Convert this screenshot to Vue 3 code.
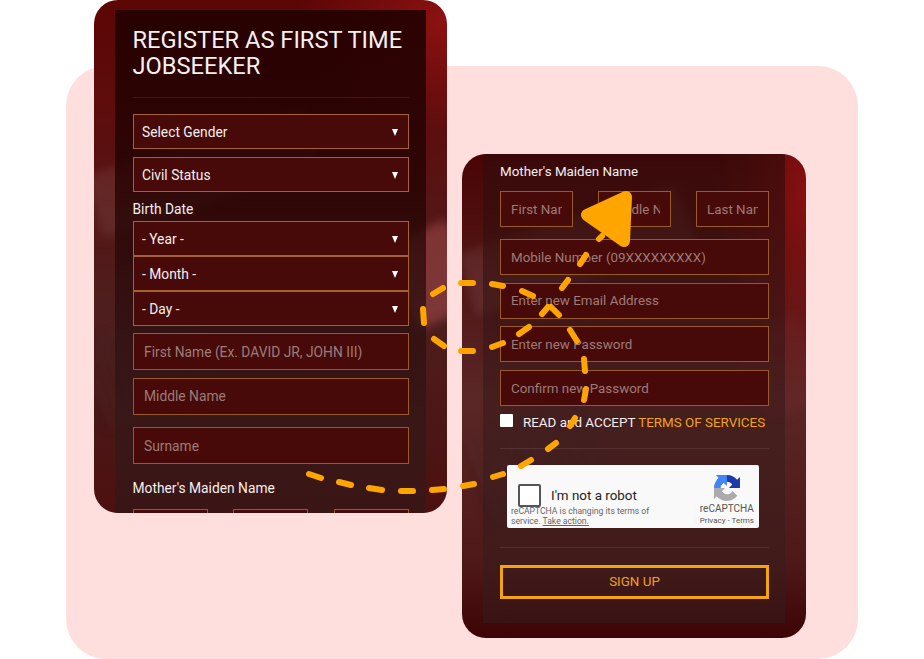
<script setup>
const dashes = [
  'M309 474L321 478', 'M339 482L351 485', 'M369 488L382 490', 'M401 491L413 491', 'M432 490L444 489',
  'M463 486L474 484', 'M493 477L503 474', 'M521 466L531 460', 'M548 449L556 443', 'M570 426L575 418',
  'M584 400L586 389', 'M585 371L584 359', 'M577 341L570 330', 'M559 315L551 307', 'M533 296L522 291',
  'M503 286L492 284', 'M473 283L461 283', 'M443 288L433 294', 'M423 309L424 323', 'M434 339L444 346',
  'M461 351L473 351', 'M492 347L503 343', 'M519 334L529 327', 'M542 314L548 307', 'M562 288L568 280',
  'M580 264L586 255', 'M599 239L602 236'
]
const topSelects = ['Select Gender', 'Civil Status']
const dateSelects = ['- Year -', '- Month -', '- Day -']
const nameInputs = ['First Name', 'Middle Name', 'Last Name']
const accountInputs = ['Mobile Number (09XXXXXXXXX)', 'Enter new Email Address', 'Enter new Password', 'Confirm new Password']
</script>

<template>
  <div class="stage">
    <div class="backdrop"></div>

    <section class="phone phone-left">
      <div class="photo"><i class="sheet"></i><i class="glow"></i><i class="keys"></i></div>
      <div class="sheet-panel">
        <h1 class="title">REGISTER AS FIRST TIME JOBSEEKER</h1>
        <hr class="rule first-rule" />
        <div v-for="s in topSelects" :key="s" class="select-box spaced">
          <span>{{ s }}</span><i class="caret"></i>
        </div>
        <label class="field-label birth">Birth Date</label>
        <div v-for="s in dateSelects" :key="s" class="select-box date">
          <span>{{ s }}</span><i class="caret"></i>
        </div>
        <input class="text-input first" placeholder="First Name (Ex. DAVID JR, JOHN III)" />
        <input class="text-input middle" placeholder="Middle Name" />
        <input class="text-input surname" placeholder="Surname" />
        <label class="field-label maiden">Mother's Maiden Name</label>
        <div class="name-row wide">
          <input v-for="n in nameInputs" :key="n" class="text-input small" />
        </div>
      </div>
    </section>

    <section class="phone phone-right">
      <div class="photo"><i class="sheet"></i><i class="glow"></i><i class="keys"></i></div>
      <div class="sheet-panel">
        <label class="field-label">Mother's Maiden Name</label>
        <div class="name-row">
          <input v-for="n in nameInputs" :key="n" class="text-input small" :placeholder="n" />
        </div>
        <div class="account">
          <input v-for="p in accountInputs" :key="p" class="text-input" :placeholder="p" />
        </div>
        <div class="terms">
          <input type="checkbox" class="check" />
          <span class="terms-text">READ and ACCEPT <a class="link">TERMS OF SERVICES</a></span>
        </div>
        <hr class="rule terms-rule" />
        <div class="captcha">
          <div class="captcha-main">
            <div class="captcha-row">
              <span class="captcha-box"></span>
              <span class="captcha-text">I'm not a robot</span>
            </div>
            <p class="captcha-note">reCAPTCHA is changing its terms of<br />service. <u>Take action.</u></p>
          </div>
          <div class="captcha-brand">
            <svg class="captcha-logo" viewBox="0 0 64 64">
              <path d="M64 31.955l-.033-1.37V4.687l-7.16 7.16C50.948 4.674 42.033.093 32.05.093c-10.4 0-19.622 4.96-25.458 12.64l11.736 11.86a15.55 15.55 0 0 1 4.754-5.334c2.05-1.6 4.952-2.906 8.968-2.906.485 0 .86.057 1.135.163 4.976.393 9.288 3.14 11.828 7.124l-8.307 8.307 32.3.001" fill="#1c3aa9" />
              <path d="M31.862 0l-1.37.033H4.594l7.16 7.16C4.58 13.05 0 21.967 0 31.95c0 10.4 4.96 19.622 12.64 25.458l11.86-11.736a15.55 15.55 0 0 1-5.334-4.754c-1.6-2.05-2.906-4.952-2.906-8.968 0-.485.057-.86.163-1.135.393-4.976 3.14-9.288 7.124-11.828l8.307 8.307L31.862 0" fill="#4285f4" />
              <path d="M.001 31.95l.033 1.37v25.9l7.16-7.16c5.86 7.173 14.774 11.754 24.76 11.754 10.39 0 19.62-4.96 25.457-12.64l-11.736-11.86a15.55 15.55 0 0 1-4.754 5.334c-2.05 1.6-4.952 2.906-8.968 2.906-.485 0-.86-.057-1.135-.163-4.976-.393-9.288-3.14-11.828-7.124l8.307-8.307-32.3-.001" fill="#ababab" />
            </svg>
            <span class="brand-name">reCAPTCHA</span>
            <span class="brand-links">Privacy - Terms</span>
          </div>
        </div>
        <hr class="rule captcha-rule" />
        <button class="signup">SIGN UP</button>
      </div>
    </section>

    <svg class="route" viewBox="0 0 924 659">
      <g fill="none" stroke="#ffa500" stroke-width="6" stroke-linecap="round">
        <path v-for="d in dashes" :key="d" :d="d" />
      </g>
      <path d="M587 215L626 197L624 241Z" fill="#ffa500" stroke="#ffa500" stroke-width="12" stroke-linejoin="round" />
    </svg>
  </div>
</template>

<style scoped>
.stage {
  position: relative;
  width: 924px;
  height: 659px;
  overflow: hidden;
  font-family: Roboto, "Liberation Sans", sans-serif;
  background: #fff;
}
.backdrop {
  margin: 66px 66px 0;
  height: 593px;
  border-radius: 40px;
  background: #ffdfdd;
}
.phone {
  position: absolute;
  overflow: hidden;
  border-radius: 24px;
  background:
    radial-gradient(150px 110px at 100% 4%, #8c1212 0%, rgba(140, 18, 18, 0) 100%),
    linear-gradient(180deg, #5c0505 0%, #5e0c0c 20%, #4e1e1e 60%, #4c1010 100%);
}
.phone-left {
  left: 94px;
  top: 0;
  width: 353px;
  height: 513px;
}
.phone-right {
  left: 462px;
  top: 154px;
  width: 344px;
  height: 484px;
  background:
    radial-gradient(90px 200px at 100% 8%, #861010 0%, rgba(134, 16, 16, 0) 100%),
    linear-gradient(180deg, #4a0505 0%, #5a2626 50%, #4f1818 85%, #3c0404 100%);
}
.photo {
  position: absolute;
  inset: 0;
  filter: blur(5px);
}
.sheet {
  position: absolute;
  left: -6px;
  top: 140px;
  width: 230px;
  height: 64px;
  background: rgba(255, 255, 255, 0.08);
  transform: rotate(-18deg);
}
.glow {
  position: absolute;
  right: -20px;
  top: 230px;
  width: 70px;
  height: 90px;
  background: rgba(170, 80, 80, 0.5);
  transform: rotate(-24deg);
}
.keys {
  position: absolute;
  left: -10px;
  top: 320px;
  width: 130px;
  height: 90px;
  background: repeating-linear-gradient(90deg, rgba(0, 0, 0, 0.2) 0 6px, rgba(255, 255, 255, 0.05) 6px 12px);
  transform: rotate(-22deg);
}
.phone-right .keys {
  left: 10px;
  top: 262px;
}
.phone-right .sheet {
  left: 0;
  top: 64px;
}
.phone-right .glow {
  top: 170px;
  right: -10px;
  background: rgba(120, 40, 40, 0.3);
}
.sheet-panel {
  position: relative;
  box-sizing: border-box;
  margin: 10px 21px 0;
  padding: 17px 17.5px 0;
  width: 311px;
  height: 600px;
  background: linear-gradient(180deg, rgba(34, 0, 0, 0.9) 0%, rgba(38, 3, 3, 0.82) 30%, rgba(46, 24, 24, 0.62) 70%, rgba(48, 24, 24, 0.6) 100%);
}
.phone-right .sheet-panel {
  margin: 0 21px;
  padding: 10px 16px 0 17px;
  width: 302px;
  height: 469px;
  background: linear-gradient(180deg, rgba(50, 10, 10, 0.66) 0%, rgba(54, 26, 26, 0.55) 60%, rgba(52, 28, 28, 0.55) 100%);
}
.title {
  margin: 0;
  color: #f6f1f0;
  font-size: 23.65px;
  font-weight: 400;
  line-height: 26.4px;
}
.rule {
  margin: 0;
  border: 0;
  height: 1px;
  background: rgba(255, 255, 255, 0.09);
}
.first-rule {
  margin: 17px 0 16.5px;
}
.select-box {
  position: relative;
  display: flex;
  align-items: center;
  box-sizing: border-box;
  height: 35px;
  width: 276px;
  padding-left: 8.5px;
  background: #470a08;
  border: 1px solid #a5622a;
  color: #f4efee;
  font-size: 13.8px;
}
.select-box.spaced {
  margin-bottom: 8px;
}
.select-box.date {
  padding-top: 1px;
}
.caret {
  position: absolute;
  right: 10px;
  top: 14px;
  width: 0;
  height: 0;
  border-left: 3.7px solid transparent;
  border-right: 3.7px solid transparent;
  border-top: 7px solid #fff;
}
.field-label {
  display: block;
  color: #f4efee;
  font-size: 13.4px;
  line-height: 16px;
}
.phone-left .field-label {
  font-size: 13.8px;
}
.birth {
  margin: 9px 0 3.7px;
}
.text-input {
  display: block;
  box-sizing: border-box;
  width: 100%;
  height: 36px;
  padding: 0 10px;
  background: #470a08;
  border: 1px solid #9a5a28;
  border-radius: 0;
  color: #fff;
  font: 13.4px Roboto, "Liberation Sans", sans-serif;
  outline: none;
}
.phone-left .text-input {
  padding-left: 10.5px;
  font-size: 13.8px;
}
.text-input::placeholder {
  color: #9d7b79;
  opacity: 1;
}
.first {
  margin-top: 7px;
  height: 37px;
}
.middle {
  margin-top: 7.5px;
  height: 37px;
}
.surname {
  margin-top: 12.5px;
  height: 37px;
}
.maiden {
  margin: 16px 0 13px;
}
.name-row {
  display: grid;
  grid-template-columns: 73px 73px 73px;
  justify-content: space-between;
  margin-top: 11px;
}
.name-row.wide {
  margin-top: 0;
  grid-template-columns: 75px 75px 75px;
}
.account {
  display: flex;
  flex-direction: column;
  gap: 7.7px;
  margin-top: 12px;
}
.terms {
  display: flex;
  align-items: flex-start;
  gap: 10px;
  margin-top: 8px;
  color: #f4efee;
  font-size: 13.4px;
  line-height: 16px;
  white-space: nowrap;
}
.terms-text {
  padding-top: 1px;
}
.check {
  appearance: none;
  flex: none;
  width: 13px;
  height: 13px;
  margin: 0;
  background: #fff;
  border-radius: 1px;
}
.link {
  color: #efa41b;
}
.terms-rule {
  margin: 17px 0 16px;
}
.captcha {
  display: flex;
  justify-content: space-between;
  box-sizing: border-box;
  margin-left: 7px;
  width: 252px;
  height: 63px;
  padding: 0 5px 0 4px;
  background: #f9f9f9;
  border-radius: 2px;
}
.captcha-row {
  display: flex;
  align-items: center;
  gap: 10px;
  margin: 19px 0 0 7px;
}
.captcha-box {
  box-sizing: border-box;
  width: 23px;
  height: 23px;
  background: #fff;
  border: 2px solid #555;
  border-radius: 2px;
}
.captcha-text {
  color: #222;
  font-size: 13.4px;
}
.captcha-note {
  margin: -1px 0 0;
  color: #666;
  font-size: 8.6px;
  line-height: 10px;
}
.captcha-brand {
  display: flex;
  flex-direction: column;
  align-items: center;
}
.captcha-logo {
  width: 26px;
  height: 26px;
  margin-top: 10px;
}
.brand-name {
  margin-top: 2px;
  color: #555;
  font-size: 10px;
  line-height: 12px;
}
.brand-links {
  margin-top: 1px;
  color: #555;
  font-size: 8px;
  line-height: 10px;
}
.captcha-rule {
  margin: 19px 0 17px;
}
.signup {
  display: block;
  box-sizing: border-box;
  width: 100%;
  height: 34px;
  padding-bottom: 2px;
  background: transparent;
  border: 3px solid #f4a40f;
  color: #efa41b;
  font: 13.4px Roboto, "Liberation Sans", sans-serif;
}
.route {
  position: absolute;
  left: 0;
  top: 0;
  width: 924px;
  height: 659px;
  pointer-events: none;
}
</style>
